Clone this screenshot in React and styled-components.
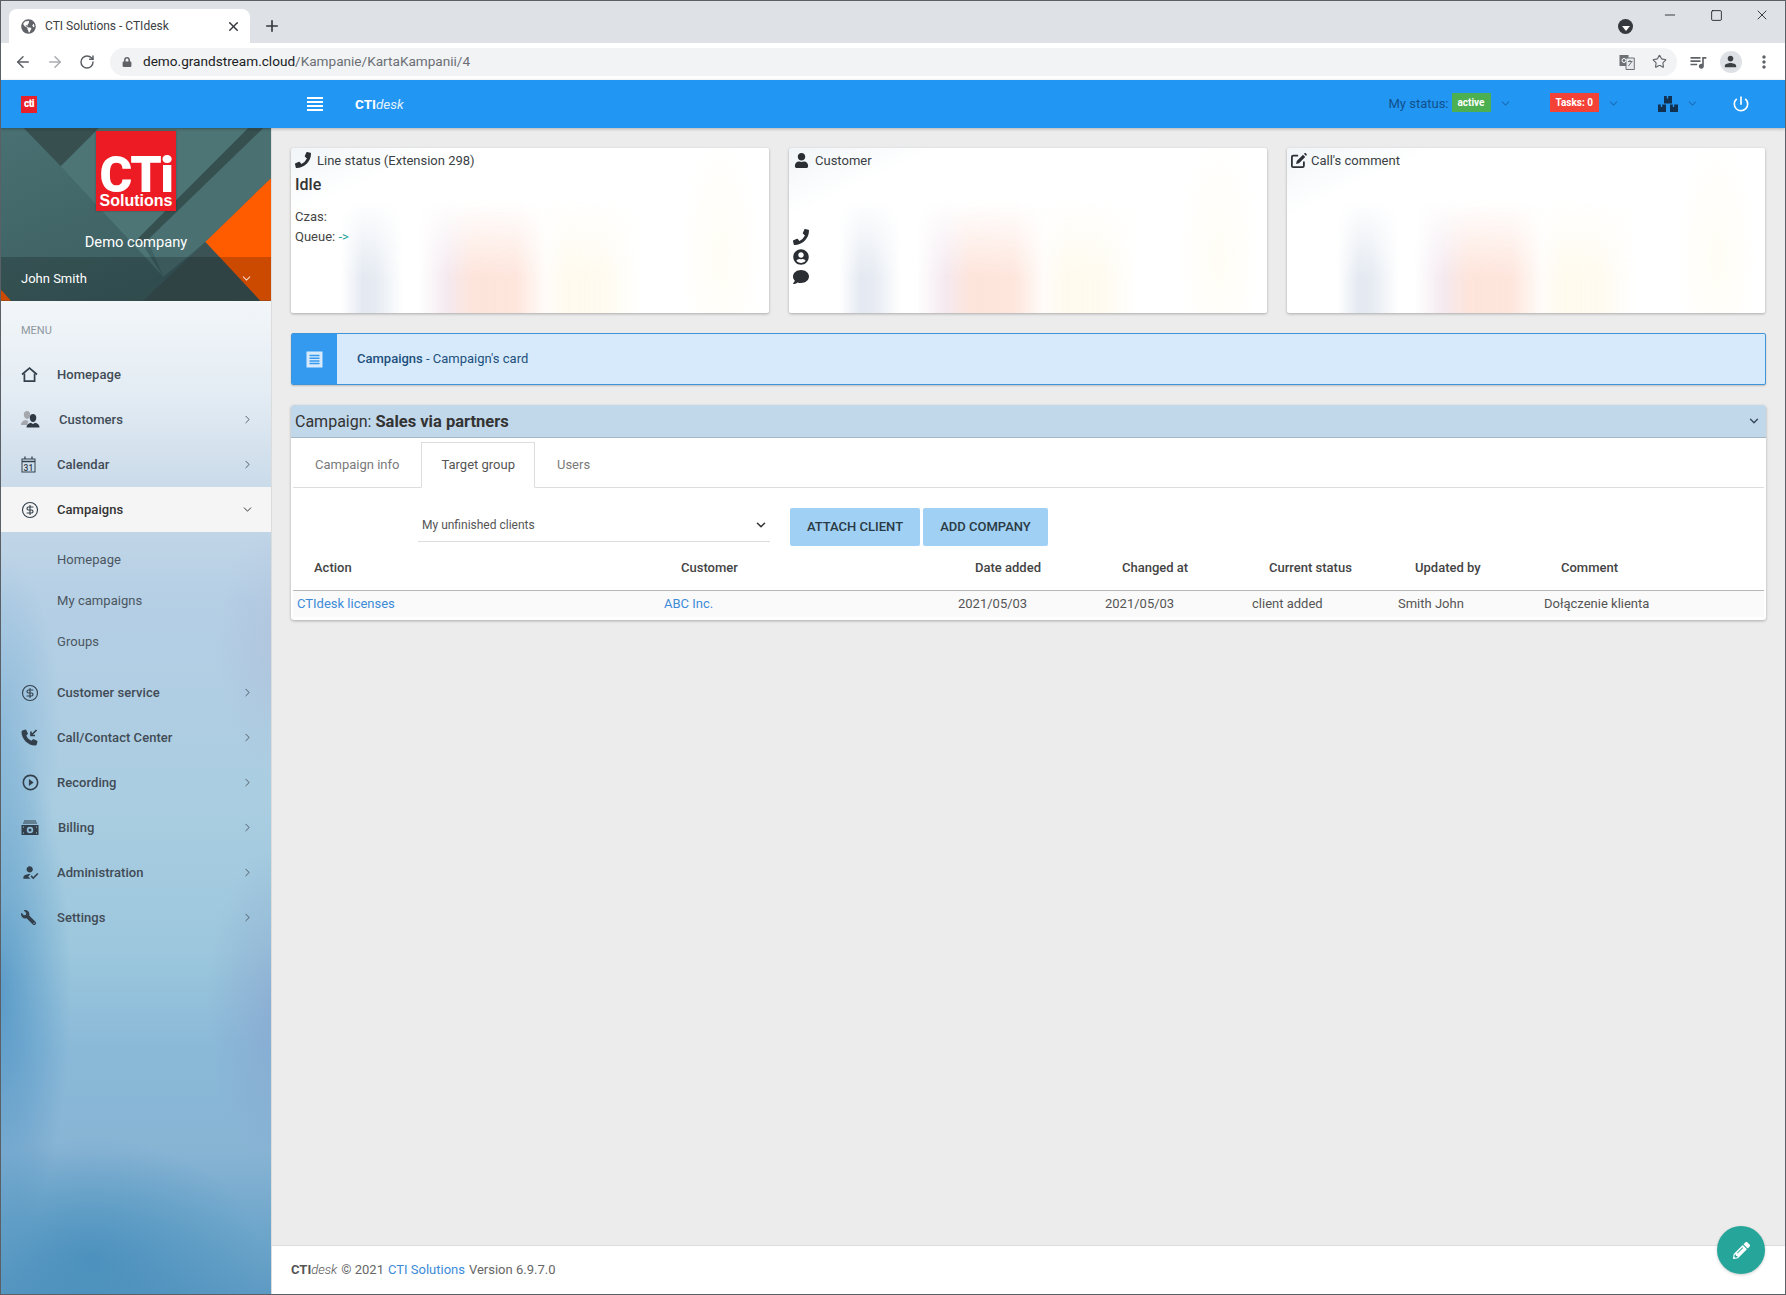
import styled, { createGlobalStyle } from "styled-components";
import { ArrowLeft, ArrowRight, RotateCw, Star, ChevronRight, ChevronDown, CircleDollarSign, X, Plus, Minus, Square } from "lucide-react";
import { FaGlobeAmericas, FaLock, FaPhoneAlt, FaUser, FaUserCircle, FaComment, FaPencilAlt, FaWrench } from "react-icons/fa";
import { MdHowToReg, MdQueueMusic, MdPerson, MdMoreVert, MdPowerSettingsNew, MdPlayCircleOutline } from "react-icons/md";

const GlobalStyle = createGlobalStyle`
  html, body { margin: 0; padding: 0; background: #ececec; }
  * { box-sizing: border-box; }
  body { font-family: Roboto, "Liberation Sans", sans-serif; font-size: 13px; color: #333; }
`;

const Window = styled.div`
  width: 1786px;
  height: 1295px;
  border: 1px solid #5b6066;
  display: flex;
  flex-direction: column;
  position: relative;
  overflow: hidden;
`;

/* browser chrome */
const TabStrip = styled.div`
  height: 42px;
  background: #dee1e6;
  display: flex;
  align-items: flex-end;
  padding-left: 8px;
  flex-shrink: 0;
`;
const BrowserTab = styled.div`
  width: 241px;
  height: 34px;
  background: #fff;
  border-radius: 8px 8px 0 0;
  display: flex;
  align-items: center;
  padding: 0 9px 0 12px;
  gap: 9px;
  color: #3c4043;
  font-size: 12px;
`;
const TabTitle = styled.span`
  flex: 1;
`;
const NewTab = styled.div`
  width: 44px;
  height: 34px;
  display: flex;
  align-items: center;
  justify-content: center;
  color: #35383c;
`;
const ChromeRight = styled.div`
  margin-left: auto;
  align-self: stretch;
  display: flex;
  align-items: flex-start;
`;
const TabSearch = styled.div`
  width: 15px;
  height: 15px;
  margin: 18px 14px 0 0;
  border-radius: 50%;
  background: #35383c;
  display: flex;
  align-items: center;
  justify-content: center;
  &::after {
    content: "";
    margin-top: 3px;
    border: 4px solid transparent;
    border-top: 5px solid #fff;
    border-bottom: 0;
  }
`;
const WinButton = styled.div`
  width: 46px;
  height: 28px;
  display: flex;
  align-items: center;
  justify-content: center;
  color: #111;
`;
const Toolbar = styled.div`
  height: 37px;
  background: #fff;
  display: flex;
  align-items: center;
  flex-shrink: 0;
  color: #5f6368;
`;
const NavButton = styled.div`
  width: 32px;
  display: flex;
  justify-content: center;
  color: ${(p) => (p.$off ? "#a9acb0" : "#5a5e63")};
  &:first-child {
    margin-left: 6px;
  }
`;
const Omnibox = styled.div`
  width: 1567px;
  height: 28px;
  margin: 0 4px 0 7px;
  border-radius: 14px;
  background: #f1f3f4;
  display: flex;
  align-items: center;
  padding: 0 2px 0 12px;
`;
const Url = styled.span`
  margin-left: 11px;
  padding-bottom: 1px;
  font-size: 13.6px;
  color: #202124;
  flex: 1;
`;
const UrlPath = styled.span`
  color: #6b6f74;
`;
const OmniIcon = styled.div`
  width: 32px;
  display: flex;
  justify-content: center;
  color: #5f6368;
`;
const ToolIcon = styled.div`
  width: 33px;
  display: flex;
  justify-content: center;
  color: #5f6368;
`;
const Avatar = styled.div`
  width: 22px;
  height: 22px;
  border-radius: 50%;
  background: #dee1e6;
  display: flex;
  align-items: center;
  justify-content: center;
  color: #3c4043;
`;

/* app header */
const TopBar = styled.header`
  height: 48px;
  background: #2196f3;
  display: flex;
  align-items: center;
  flex-shrink: 0;
  box-shadow: 0 1px 3px rgba(0, 0, 0, 0.25);
  z-index: 2;
  color: #fff;
`;
const TinyLogo = styled.div`
  width: 16px;
  height: 17px;
  margin-left: 20px;
  background: #e8202a;
  color: #fff;
  font-size: 10px;
  font-weight: 900;
  line-height: 15px;
  text-align: center;
  letter-spacing: -0.5px;
`;
const Burger = styled.svg`
  margin-left: 270px;
`;
const Brand = styled.div`
  margin-left: 32px;
  font-size: 13.5px;
  font-weight: 700;
  color: #fff;
  i {
    font-weight: 400;
    color: #e3f2fd;
  }
`;
const TopRight = styled.div`
  margin-left: auto;
  display: flex;
  align-items: center;
  padding-right: 34px;
`;
const StatusLabel = styled.span`
  font-size: 13px;
  color: #12508c;
  margin: -2px -1px 0 0;
`;
const Badge = styled.span`
  background: ${(p) => p.$bg};
  height: 19px;
  margin: -3px 0 0 4px;
  padding: 0 ${(p) => p.$pad}px;
  font-size: 10px;
  font-weight: 700;
  line-height: 19px;
  color: #fff;
`;
const TopChevron = styled(ChevronDown)`
  color: #1b6fb8;
  margin: -2px ${(p) => p.$right}px 0 ${(p) => p.$left}px;
`;

const Body = styled.div`
  flex: 1;
  display: flex;
  min-height: 0;
`;

/* sidebar */
const Sidebar = styled.aside`
  width: 270px;
  flex-shrink: 0;
  display: flex;
  flex-direction: column;
  background:
    radial-gradient(ellipse 70px 260px at 0 860px, rgba(45, 125, 185, 0.55), transparent),
    radial-gradient(ellipse 60px 170px at 0 600px, rgba(80, 150, 200, 0.35), transparent),
    radial-gradient(ellipse 170px 120px at 90px 1130px, rgba(50, 130, 180, 0.5), transparent),
    radial-gradient(ellipse 70px 160px at 275px 880px, rgba(130, 150, 200, 0.4), transparent),
    radial-gradient(ellipse 60px 120px at 275px 520px, rgba(170, 180, 210, 0.35), transparent),
    linear-gradient(180deg, #f2f6f9 173px, #e2ebf3 272px, #c6d8e8 372px, #b5cfe5 472px, #b0cee3 572px, #aacde1 672px, #9cc7dd 822px, #8ab9d8 922px, #88b4d4 1022px, #6ea6cb 1102px, #5d9ac3 1166px);
`;
const SideHead = styled.div`
  position: relative;
  height: 173px;
  background: linear-gradient(160deg, #497072, #3a5b5d);
  display: flex;
  flex-direction: column;
  overflow: hidden;
  flex-shrink: 0;
`;
const HeadArt = styled.svg`
  position: absolute;
  inset: 0;
`;
const BigLogo = styled.div`
  position: relative;
  width: 80px;
  height: 80px;
  margin: 3px auto 0;
  background: #ed1c24;
  color: #fff;
  text-align: center;
  box-shadow: 0 0 2px rgba(0, 0, 0, 0.3);
`;
const LogoMark = styled.div`
  font-size: 50px;
  font-weight: 900;
  line-height: 36px;
  padding-top: 26px;
  letter-spacing: -1.5px;
`;
const LogoSub = styled.div`
  font-family: "Liberation Sans", sans-serif;
  font-size: 16px;
  font-weight: 700;
  line-height: 15px;
`;
const Company = styled.div`
  position: relative;
  margin-top: 21px;
  text-align: center;
  font-size: 14.7px;
  line-height: 20px;
  color: #fff;
`;
const UserBar = styled.div`
  position: relative;
  margin-top: auto;
  height: 44px;
  background: rgba(0, 0, 0, 0.2);
  display: flex;
  align-items: center;
  justify-content: space-between;
  padding: 0 18px 2px 20px;
  font-size: 13px;
  color: #fff;
`;
const MenuLabel = styled.div`
  height: 51px;
  padding: 23px 0 0 20px;
  font-size: 11px;
  line-height: 14px;
  color: #8f979e;
`;
const NavRow = styled.div`
  height: 45px;
  display: flex;
  align-items: center;
  padding: 0 17px 0 20px;
  font-weight: 500;
  letter-spacing: 0.05px;
  color: ${(p) => (p.$active ? "#333" : "#414b55")};
  background: ${(p) => (p.$active ? "#f5f5f5" : "transparent")};
`;
const NavIcon = styled.div`
  width: ${(p) => p.$w || 36}px;
  flex-shrink: 0;
  display: flex;
  color: #33404c;
`;
const NavText = styled.span`
  flex: 1;
`;
const SubList = styled.div`
  padding: 7px 0 8px;
`;
const SubRow = styled.div`
  height: 41px;
  padding-left: 56px;
  line-height: 41px;
  letter-spacing: 0.05px;
  color: #4b5661;
`;
const WrenchIcon = styled(FaWrench)`
  transform: scaleX(-1);
`;

/* main column */
const Main = styled.main`
  flex: 1;
  min-width: 0;
  display: flex;
  flex-direction: column;
  background: #ececec;
  border-left: 1px solid #dcdcdc;
`;
const Content = styled.div`
  flex: 1;
  padding: 20px 19px 0;
`;
const CardRow = styled.div`
  display: grid;
  grid-template-columns: repeat(3, 478px);
  gap: 20px;
`;
const Card = styled.section`
  position: relative;
  isolation: isolate;
  height: 165px;
  padding: 2px 4px;
  border-radius: 2px;
  box-shadow: 0 1px 3px rgba(0, 0, 0, 0.28);
  background:
    radial-gradient(ellipse 40px 120px at 430px 110px, rgba(255, 252, 240, 0.7), transparent),
    linear-gradient(155deg, #f1f5f8 0, #fff 18%);
  background-color: #fff;
  &::before {
    content: "";
    position: absolute;
    inset: 0;
    z-index: -1;
    opacity: 0.72;
    background: linear-gradient(90deg,
      rgba(205, 215, 230, 0) 50px,
      rgba(205, 215, 230, 0.75) 72px,
      rgba(205, 215, 230, 0.7) 84px,
      rgba(205, 215, 230, 0) 112px,
      rgba(232, 215, 232, 0) 128px,
      rgba(236, 216, 228, 0.75) 155px,
      rgba(253, 216, 202, 0.95) 182px,
      rgba(253, 216, 202, 0.9) 225px,
      rgba(255, 235, 215, 0.2) 255px,
      rgba(255, 247, 225, 0.8) 278px,
      rgba(255, 247, 225, 0.7) 312px,
      rgba(255, 247, 225, 0) 350px);
    -webkit-mask-image: linear-gradient(180deg, transparent 32%, #000 78%);
    mask-image: linear-gradient(180deg, transparent 32%, #000 78%);
  }
`;
const CardTitle = styled.div`
  height: 20px;
  display: flex;
  align-items: center;
  gap: ${(p) => p.$gap || 6}px;
  color: #3a3f44;
  font-size: 13px;
`;
const CardIcon = styled.span`
  width: 16px;
  display: flex;
  justify-content: center;
  color: #2b2f33;
`;
const PhoneIcon = styled(FaPhoneAlt)`
  transform: scaleX(-1);
`;
const IdleText = styled.div`
  margin-top: 5px;
  font-size: 16px;
  font-weight: 500;
  line-height: 20px;
  color: #333;
`;
const Meta = styled.div`
  margin-top: ${(p) => p.$top || 0}px;
  font-size: 13px;
  line-height: 20px;
  color: #444;
`;
const MetaArrow = styled.span`
  color: #26a69a;
`;
const IconStack = styled.div`
  margin-top: 59px;
  display: flex;
  flex-direction: column;
  gap: 4px;
  color: #2b2f33;
`;
const Banner = styled.div`
  margin-top: 20px;
  height: 52px;
  display: flex;
  align-items: center;
  background: #d7eafb;
  border: 1px solid #3f95d8;
  border-radius: 2px;
  box-shadow: 0 1px 2px rgba(0, 0, 0, 0.2);
  color: #21507c;
  font-weight: 500;
  overflow: hidden;
`;
const BannerIcon = styled.div`
  width: 46px;
  align-self: stretch;
  margin: -1px 0 -1px -1px;
  background: #339af0;
  display: flex;
  align-items: center;
  justify-content: center;
`;
const BannerText = styled.span`
  margin-left: 20px;
  padding-bottom: 2px;
  font-weight: 400;
  b {
    font-weight: 500;
  }
`;
const Panel = styled.section`
  margin-top: 20px;
  background: #fff;
  border-radius: 3px;
  box-shadow: 0 1px 3px rgba(0, 0, 0, 0.28);
  padding-bottom: 3px;
`;
const PanelHead = styled.div`
  height: 33px;
  padding: 0 5px 0 4px;
  display: flex;
  align-items: center;
  justify-content: space-between;
  background: #c1d7ea;
  border-bottom: 1px solid #a4b5c4;
  border-radius: 3px 3px 0 0;
  font-size: 16px;
  color: #333;
  b {
    font-size: 16.5px;
    font-weight: 700;
  }
`;
const PanelBody = styled.div`
  padding: 4px 2px 0;
`;
const TabRow = styled.div`
  height: 46px;
  display: flex;
  border-bottom: 1px solid #ddd;
`;
const PanelTab = styled.div`
  height: 46px;
  padding: 0 ${(p) => (p.$active ? 19 : 21)}px;
  line-height: 44px;
  font-size: 13px;
  color: ${(p) => (p.$active ? "#555" : "#7a7a7a")};
  background: ${(p) => (p.$active ? "#fff" : "transparent")};
  border: 1px solid ${(p) => (p.$active ? "#ddd" : "transparent")};
  border-bottom-color: ${(p) => (p.$active ? "#fff" : "transparent")};
`;
const Controls = styled.div`
  margin-top: 20px;
  padding-left: 125px;
  display: flex;
  align-items: flex-start;
`;
const FakeSelect = styled.div`
  width: 352px;
  height: 34px;
  padding: 0 2px 0 4px;
  display: flex;
  align-items: center;
  justify-content: space-between;
  border-bottom: 1px solid #ddd;
  font-size: 12px;
  color: #555;
`;
const ActionButton = styled.div`
  width: ${(p) => p.$w}px;
  height: 38px;
  margin-left: ${(p) => p.$gap}px;
  border-radius: 2px;
  background: #a0d0f3;
  text-align: center;
  line-height: 38px;
  font-size: 13px;
  font-weight: 500;
  color: #2a3a44;
`;
const TableGrid = styled.div`
  display: grid;
  grid-template-columns: 367px 294px 147px 147px 146px 146px 1fr;
  align-items: center;
`;
const HeadRow = styled(TableGrid)`
  height: 45px;
  padding-bottom: 2px;
  border-bottom: 1px solid #b8b8b8;
`;
const HeadCell = styled.div`
  padding-left: 21px;
  font-weight: 500;
  color: #444;
`;
const DataRow = styled(TableGrid)`
  height: 26px;
  padding-bottom: 2px;
  background: #fafafa;
`;
const DataCell = styled.div`
  padding-left: 4px;
  color: ${(p) => (p.$link ? "#3d8bd8" : "#555")};
`;
const Footer = styled.footer`
  height: 49px;
  flex-shrink: 0;
  padding: 0 0 2px 19px;
  display: flex;
  align-items: center;
  gap: 4px;
  background: #fff;
  border-top: 1px solid #ddd;
  color: #666;
  font-size: 13px;
`;
const FootBrand = styled.span`
  font-weight: 700;
  color: #555;
  i {
    font-weight: 300;
    color: #555;
  }
`;
const FootLink = styled.span`
  color: #3d8bd8;
`;
const Fab = styled.div`
  position: absolute;
  right: 20px;
  bottom: 20px;
  width: 48px;
  height: 48px;
  border-radius: 50%;
  background: #26a69a;
  color: #fff;
  display: flex;
  align-items: center;
  justify-content: center;
  box-shadow: 0 1px 3px rgba(0, 0, 0, 0.2);
`;

const HomeIcon = () => (
  <svg width="17" height="16" viewBox="0 0 17 16" fill="none" stroke="currentColor" strokeWidth="1.7">
    <path d="M1 7.5 8.5 1.2 16 7.5" />
    <path d="M3.4 6.5V14.2H13.6V6.5" />
  </svg>
);

const PeopleIcon = () => (
  <svg width="19" height="17" viewBox="0 0 19 17">
    <path d="M6 0c2 0 3.200 1.500 3.200 3.500S8 8 6 8 2.800 5.500 2.800 3.500 4 0 6 0ZM0 13c.6-2.500 2.200-3.500 4.500-4l3 1-1.500 4H0Z" fill="#a4a8ad" />
    <path d="M12 3c2 0 3.300 1.600 3.300 3.700S14 11 12 11 8.700 8.800 8.700 6.700 10 3 12 3ZM5.500 16.500c0-2.800 1.500-4 4.200-4.800L12 13l2.300-1.300c2.700.8 4.200 2 4.200 4.800Z" fill="#2f3a45" />
  </svg>
);

const CalendarIcon = () => (
  <svg width="15" height="17" viewBox="0 0 15 17" fill="none" stroke="currentColor">
    <rect x="1" y="3" width="13" height="13" />
    <path d="M1 5.500H14M4 .5V3M11 .5V3" strokeWidth="1.300" />
    <text x="7.500" y="14.500" fontSize="8.500" fontFamily="Roboto" fill="currentColor" stroke="none" textAnchor="middle">31</text>
  </svg>
);

const MoneyIcon = () => (
  <svg width="18" height="15" viewBox="0 0 18 15" fill="currentColor">
    <path d="M3 .5h12v1H3zM2 2.500h14v1H2z" />
    <path fillRule="evenodd" d="M.5 5h17v10H.5ZM9 6.800a3 3 0 1 0 0 6.400 3 3 0 0 0 0-6.400ZM3 6.500H2V8a1.500 1.500 0 0 0 1-1.500Zm12 0c0 .8.400 1.300 1 1.500V6.500ZM2 12v1.500h1A1.500 1.500 0 0 0 2 12Zm14 0a1.500 1.500 0 0 0-1 1.500h1Z" />
    <circle cx="9" cy="10" r="1.500" />
  </svg>
);

const CallIcon = () => (
  <svg width="17" height="17" viewBox="0 0 17 17">
    <path d="M2 1.200 5 .5 7 4.800 5.300 6.500C6.300 9 8 10.700 10.500 11.700L12.200 10 16.500 12 15.800 15.200C15.600 16 15 16.500 14 16.500 7 16.500.5 10 .5 3 .5 2.100 1.100 1.400 2 1.200Z" fill="currentColor" />
    <path d="M15.500 1 10.500 6M10 2.500V6.500H14" fill="none" stroke="currentColor" strokeWidth="1.700" />
  </svg>
);

const ListIcon = () => (
  <svg width="17" height="17" viewBox="0 0 17 17">
    <rect x="1" y="1" width="15" height="15" fill="#d7eafb" stroke="#d7eafb" />
    <path d="M3.500 4.500h10M3.500 7.200h10M3.500 9.900h10M3.500 12.600h10" stroke="#339af0" strokeWidth="1.500" />
  </svg>
);

const TranslateIcon = () => (
  <svg width="16" height="16" viewBox="0 0 16 16">
    <rect x="0.500" y="1" width="9" height="11" fill="#6d7175" />
    <path d="M7 4h8.300v11.500H7Z" fill="#e8eaed" stroke="#6d7175" />
    <circle cx="5" cy="6.500" r="2" fill="none" stroke="#fff" />
    <path d="M9 7.500h4.500M11 6v1.500M9.500 12l3-4" stroke="#6d7175" />
  </svg>
);

const EditIcon = () => (
  <svg width="18" height="17" viewBox="0 0 18 17">
    <path d="M8 3H2.500C1.700 3 1 3.700 1 4.500v10.500C1 15.400 1.600 16 2.500 16h10.500c.8 0 1.500-.7 1.500-1.500V9.500" fill="none" stroke="currentColor" strokeWidth="2" />
    <path d="M13.500 2 16 4.500 9 11.500 5.700 12.300 6.500 9ZM14.500 1 15.300.4C15.700.1 16.200.1 16.600.4L17.500 1.300C17.900 1.700 17.900 2.200 17.500 2.600L16.900 3.400Z" fill="currentColor" />
  </svg>
);

const BoxesIcon = () => (
  <svg width="20" height="16" viewBox="0 0 20 16" fill="#12304f">
    <path d="M6 0h2.800v2.500h1.400V0H14v7.500H6Z" />
    <path d="M0 8.500h2.800V11h1.400V8.500H8V16H0Z" />
    <path d="M12 8.500h2.800V11h1.400V8.500H20V16h-8Z" />
  </svg>
);

const HeaderArt = () => (
  <HeadArt width="270" height="173" viewBox="0 0 271 173">
    <polygon points="23,0 100,0 60,38" fill="#37504f" />
    <polygon points="60,38 98,0 248,0 138,110 163,149" fill="#4e7576" />
    <polygon points="263,0 271,0 271,50 205,114 163,149 147,112" fill="#4a7072" />
    <polygon points="248,0 263,0 147,112 131,117" fill="#36504f" />
    <polygon points="271,50 205,114 260,173 271,173" fill="#ff5c00" />
    <polygon points="205,114 143,173 260,173" fill="#3b5355" />
    <polygon points="0,162 0,173 10,173" fill="#ff5c00" />
  </HeadArt>
);

const navTop = [
  { label: "Homepage", icon: <HomeIcon /> },
  { label: "Customers", icon: <PeopleIcon />, more: true, w: 38 },
  { label: "Calendar", icon: <CalendarIcon />, more: true },
];
const navBottom = [
  { label: "Customer service", icon: <CircleDollarSign size={18} strokeWidth={1.5} />, more: true },
  { label: "Call/Contact Center", icon: <CallIcon />, more: true },
  { label: "Recording", icon: <MdPlayCircleOutline size={19} />, more: true },
  { label: "Billing", icon: <MoneyIcon />, more: true, w: 37 },
  { label: "Administration", icon: <MdHowToReg size={19} />, more: true },
  { label: "Settings", icon: <WrenchIcon size={15} />, more: true },
];
const subMenu = ["Homepage", "My campaigns", "Groups"];
const columns = ["Action", "Customer", "Date added", "Changed at", "Current status", "Updated by", "Comment"];
const rowCells = [
  { text: "CTIdesk licenses", link: true },
  { text: "ABC Inc.", link: true },
  { text: "2021/05/03" },
  { text: "2021/05/03" },
  { text: "client added" },
  { text: "Smith John" },
  { text: "Dołączenie klienta" },
];

const NavItem = ({ item }) => (
  <NavRow>
    <NavIcon $w={item.w}>{item.icon}</NavIcon>
    <NavText>{item.label}</NavText>
    {item.more && <ChevronRight size={13} strokeWidth={1.6} />}
  </NavRow>
);

export default function App() {
  return (
    <>
      <GlobalStyle />
      <Window>
        <TabStrip>
          <BrowserTab>
            <FaGlobeAmericas size={15} color="#5f6368" />
            <TabTitle>CTI Solutions - CTIdesk</TabTitle>
            <X size={15} strokeWidth={2.4} color="#35383c" />
          </BrowserTab>
          <NewTab>
            <Plus size={18} strokeWidth={2.2} />
          </NewTab>
          <ChromeRight>
            <TabSearch />
            <WinButton><Minus size={16} strokeWidth={1.2} /></WinButton>
            <WinButton><Square size={13} strokeWidth={1.5} /></WinButton>
            <WinButton><X size={16} strokeWidth={1.2} /></WinButton>
          </ChromeRight>
        </TabStrip>
        <Toolbar>
          <NavButton><ArrowLeft size={18} strokeWidth={2} /></NavButton>
          <NavButton $off><ArrowRight size={18} strokeWidth={2} /></NavButton>
          <NavButton><RotateCw size={16} strokeWidth={2.2} /></NavButton>
          <Omnibox>
            <FaLock size={10} color="#5f6368" />
            <Url>demo.grandstream.cloud<UrlPath>/Kampanie/KartaKampanii/4</UrlPath></Url>
            <OmniIcon><TranslateIcon /></OmniIcon>
            <OmniIcon><Star size={15} strokeWidth={1.8} /></OmniIcon>
          </Omnibox>
          <ToolIcon><MdQueueMusic size={20} /></ToolIcon>
          <ToolIcon><Avatar><MdPerson size={17} /></Avatar></ToolIcon>
          <ToolIcon><MdMoreVert size={20} /></ToolIcon>
        </Toolbar>
        <TopBar>
          <TinyLogo>cti</TinyLogo>
          <Burger width="16" height="14" viewBox="0 0 16 14" stroke="#fff" strokeWidth="1.800">
            <path d="M0 1h16M0 5h16M0 9h16M0 13h16" />
          </Burger>
          <Brand>CTI<i>desk</i></Brand>
          <TopRight>
            <StatusLabel>My status:</StatusLabel>
            <Badge $bg="#4caf50" $pad={6}>active</Badge>
            <TopChevron size={13} $left={8} $right={34} />
            <Badge $bg="#f44336" $pad={6}>Tasks: 0</Badge>
            <TopChevron size={13} $left={8} $right={38} />
            <BoxesIcon />
            <TopChevron size={13} $left={8} $right={32} />
            <MdPowerSettingsNew size={20} />
          </TopRight>
        </TopBar>
        <Body>
          <Sidebar>
            <SideHead>
              <HeaderArt />
              <BigLogo>
                <LogoMark>CTi</LogoMark>
                <LogoSub>Solutions</LogoSub>
              </BigLogo>
              <Company>Demo company</Company>
              <UserBar>
                <span>John Smith</span>
                <ChevronDown size={13} color="#f3d5c5" />
              </UserBar>
            </SideHead>
            <MenuLabel>MENU</MenuLabel>
            {navTop.map((item) => <NavItem key={item.label} item={item} />)}
            <NavRow $active>
              <NavIcon><CircleDollarSign size={18} strokeWidth={1.5} /></NavIcon>
              <NavText>Campaigns</NavText>
              <ChevronDown size={13} strokeWidth={1.8} />
            </NavRow>
            <SubList>
              {subMenu.map((label) => <SubRow key={label}>{label}</SubRow>)}
            </SubList>
            {navBottom.map((item) => <NavItem key={item.label} item={item} />)}
          </Sidebar>
          <Main>
            <Content>
              <CardRow>
                <Card>
                  <CardTitle>
                    <CardIcon><PhoneIcon size={16} /></CardIcon>
                    Line status (Extension 298)
                  </CardTitle>
                  <IdleText>Idle</IdleText>
                  <Meta $top={12}>Czas:</Meta>
                  <Meta>Queue: <MetaArrow>-&gt;</MetaArrow></Meta>
                </Card>
                <Card>
                  <CardTitle $gap={6}>
                    <CardIcon><FaUser size={15} /></CardIcon>
                    Customer
                  </CardTitle>
                  <IconStack>
                    <PhoneIcon size={16} />
                    <FaUserCircle size={16} />
                    <FaComment size={16} />
                  </IconStack>
                </Card>
                <Card>
                  <CardTitle $gap={4}>
                    <CardIcon><EditIcon /></CardIcon>
                    Call's comment
                  </CardTitle>
                </Card>
              </CardRow>
              <Banner>
                <BannerIcon><ListIcon /></BannerIcon>
                <BannerText><b>Campaigns</b> - Campaign's card</BannerText>
              </Banner>
              <Panel>
                <PanelHead>
                  <span>Campaign: <b>Sales via partners</b></span>
                  <ChevronDown size={14} strokeWidth={2.4} color="#34495e" />
                </PanelHead>
                <PanelBody>
                  <TabRow>
                    <PanelTab>Campaign info</PanelTab>
                    <PanelTab $active>Target group</PanelTab>
                    <PanelTab>Users</PanelTab>
                  </TabRow>
                  <Controls>
                    <FakeSelect>
                      My unfinished clients
                      <ChevronDown size={14} strokeWidth={2.6} color="#333" />
                    </FakeSelect>
                    <ActionButton $w={130} $gap={20}>ATTACH CLIENT</ActionButton>
                    <ActionButton $w={125} $gap={3}>ADD COMPANY</ActionButton>
                  </Controls>
                  <HeadRow>
                    {columns.map((c) => <HeadCell key={c}>{c}</HeadCell>)}
                  </HeadRow>
                  <DataRow>
                    {rowCells.map((c, i) => <DataCell key={i} $link={c.link}>{c.text}</DataCell>)}
                  </DataRow>
                </PanelBody>
              </Panel>
            </Content>
            <Footer>
              <FootBrand>CTI<i>desk</i></FootBrand>
              © 2021
              <FootLink>CTI Solutions</FootLink>
              Version 6.9.7.0
            </Footer>
          </Main>
        </Body>
        <Fab><FaPencilAlt size={17} /></Fab>
      </Window>
    </>
  );
}
